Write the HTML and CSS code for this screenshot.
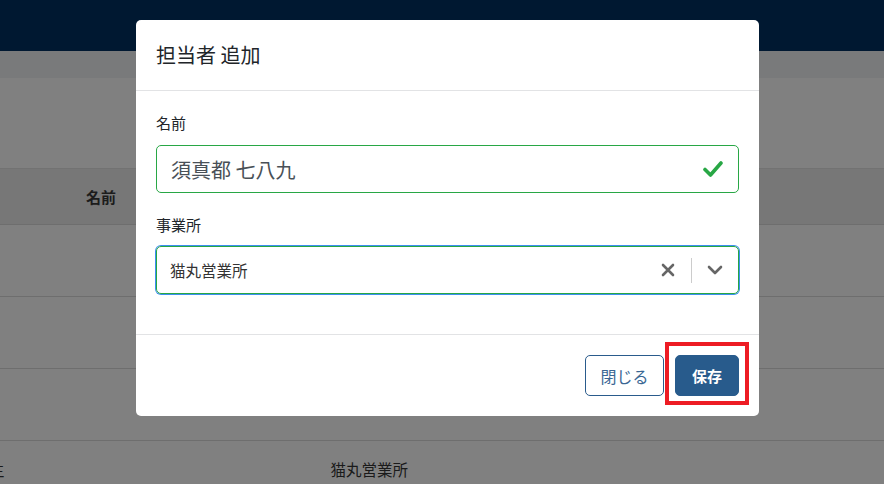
FILE: index.html
```html
<!DOCTYPE html>
<html lang="ja">
<head>
<meta charset="utf-8">
<link rel="stylesheet" href="styles.css">
</head>
<body>
<div class="page">
  <div class="navbar"></div>
  <div class="subbar"></div>
  <div class="area"></div>
  <div class="thead"><span class="th-name">名前</span></div>
  <div class="row"></div>
  <div class="row"></div>
  <div class="row"></div>
  <div class="row last"><span class="cut">主</span><span class="office">猫丸営業所</span></div>
</div>

<div class="modal">
  <div class="modal-header">担当者 追加</div>
  <div class="modal-body">
    <div class="group">
      <div class="label">名前</div>
      <div class="input valid">
        <span class="value">須真都 七八九</span>
        <svg class="check" width="20" height="18" viewBox="0 0 20 18"><path d="M2 9.5 L7.5 15 L18 3" fill="none" stroke="#28a745" stroke-width="3.6" stroke-linecap="round" stroke-linejoin="round"/></svg>
      </div>
    </div>
    <div class="group">
      <div class="label">事業所</div>
      <div class="select">
        <span class="svalue">猫丸営業所</span>
        <svg class="clear" width="14" height="14" viewBox="0 0 14 14"><path d="M2 2 L12 12 M12 2 L2 12" stroke="#666" stroke-width="2.6" stroke-linecap="round"/></svg>
        <span class="sep"></span>
        <svg class="chev" width="16" height="10" viewBox="0 0 16 10"><path d="M2 2 L8 8 L14 2" fill="none" stroke="#666" stroke-width="2.6" stroke-linecap="round" stroke-linejoin="round"/></svg>
      </div>
    </div>
  </div>
  <div class="modal-footer">
    <button class="btn btn-outline">閉じる</button>
    <span class="highlight"><button class="btn btn-primary">保存</button></span>
  </div>
</div>
</body>
</html>
```

FILE: styles.css
```css
html, body {
  margin: 0;
  padding: 0;
}
body {
  width: 884px;
  height: 484px;
  overflow: hidden;
  background: #808080;
  font-family: "Noto Sans CJK JP", "Noto Sans", sans-serif;
}
.page {
  display: flex;
  flex-direction: column;
}
.navbar {
  height: 51px;
  background: #001831;
}
.subbar {
  height: 27px;
  background: #797a7b;
}
.area {
  height: 91px;
  background: #808080;
  border-bottom: 1px solid #727272;
  box-sizing: border-box;
}
.thead {
  height: 56px;
  background: #777777;
  display: flex;
  align-items: center;
  padding-left: 86px;
  box-sizing: border-box;
  border-bottom: 1px solid #6e6e6e;
}
.th-name {
  font-weight: bold;
  font-size: 15px;
  color: #1c1c1c;
}
.row {
  height: 72px;
  border-bottom: 1px solid #6e6e6e;
  box-sizing: border-box;
}
.row.last {
  display: flex;
  align-items: center;
  height: 56px;
  border-bottom: none;
  font-size: 15.5px;
  color: #1a1a1a;
}
.cut {
  margin-left: -11px;
}
.office {
  margin-left: 326px;
}

.modal {
  position: absolute;
  left: 136px;
  top: 20px;
  width: 623px;
  height: 396px;
  background: #fff;
  border-radius: 5px;
  display: flex;
  flex-direction: column;
  box-sizing: border-box;
}
.modal-header {
  padding: 20px;
  line-height: 30px;
  font-size: 20px;
  color: #212529;
  border-bottom: 1px solid #e2e3e5;
}
.modal-body {
  padding: 20px 20px 20px;
  border-bottom: 1px solid #e2e3e5;
}
.group {
  margin-bottom: 20px;
}
.label {
  font-size: 15px;
  line-height: 24px;
  color: #212529;
  margin-bottom: 10px;
}
.group + .group .label {
  margin-bottom: 9px;
}
.input {
  height: 48px;
  box-sizing: border-box;
  border: 1px solid #28a745;
  border-radius: 5px;
  display: flex;
  align-items: center;
  padding: 0 14px 0 14px;
}
.value {
  flex: 1;
  font-size: 20px;
  color: #495057;
}
.check {
  margin-right: 1px;
}
.select {
  height: 48px;
  box-sizing: border-box;
  border: 1px solid #28a745;
  box-shadow: 0 0 0 1px #3d8ff0;
  border-radius: 5px;
  display: flex;
  align-items: center;
  padding: 0 15px 0 13px;
}
.svalue {
  flex: 1;
  font-size: 15.5px;
  color: #333;
}
.clear {
  margin-right: 16px;
}
.sep {
  width: 1px;
  height: 25px;
  background: #cccccc;
  margin-right: 15px;
}
.modal-footer {
  flex: 1;
  display: flex;
  justify-content: flex-end;
  align-items: flex-start;
  padding: 20px;
  gap: 11px;
}
.btn {
  height: 41px;
  box-sizing: border-box;
  border-radius: 5px;
  font-family: "Noto Sans CJK JP", "Noto Sans", sans-serif;
  font-size: 16px;
  padding: 0;
  margin: 0;
  display: block;
}
.btn-outline {
  width: 79px;
  background: #fff;
  border: 1px solid #2a5b8c;
  color: #3a6794;
}
.highlight {
  position: relative;
  display: block;
}
.highlight::before {
  content: "";
  position: absolute;
  left: -10px;
  top: -13px;
  right: -10px;
  bottom: -9px;
  border: 4px solid #ed1c24;
}
.btn-primary {
  width: 64px;
  background: #285b8c;
  border: 1px solid #285b8c;
  color: #fff;
  font-weight: bold;
  font-size: 15px;
}
```
